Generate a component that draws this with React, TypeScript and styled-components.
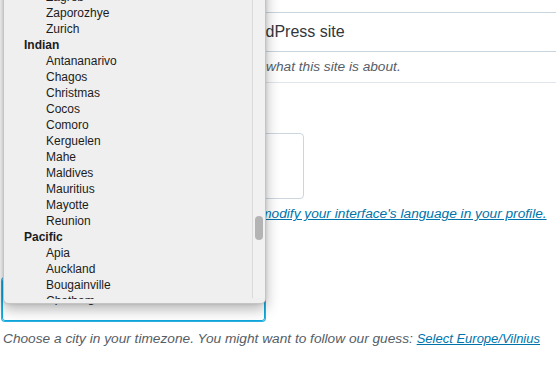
import React from 'react';
import styled, { createGlobalStyle } from 'styled-components';

const GlobalStyle = createGlobalStyle`
  html, body {
    margin: 0;
    padding: 0;
    background: #fff;
    overflow: hidden;
  }
  body {
    font-family: "Liberation Sans", Arial, sans-serif;
  }
`;

const Page = styled.div`
  position: relative;
  width: 556px;
  height: 372px;
  overflow: hidden;
  background: #fff;
`;

const Form = styled.div`
  display: flex;
  flex-direction: column;
  padding-top: 12px;
`;

const Field = styled.div<{ $indent?: number }>`
  margin-left: ${(p) => p.$indent ?? 123}px;
`;

const TextInput = styled.div`
  box-sizing: border-box;
  width: 520px;
  height: 40px;
  border: 1px solid #c8d4de;
  border-right: none;
  padding-left: 20px;
  font-size: 16px;
  line-height: 38px;
  color: #32373c;
  white-space: nowrap;
`;

const Description = styled.p`
  margin: 5px 0 0;
  font-size: 13.7px;
  line-height: 20px;
  font-style: italic;
  color: #555d66;
  white-space: nowrap;
`;

const Link = styled.a<{ $size?: number }>`
  color: #0073aa;
  text-decoration: underline;
  font-size: ${(p) => (p.$size ? `${p.$size}px` : 'inherit')};
`;

const Divider = styled.hr`
  margin: 5px 0 0 120px;
  border: none;
  border-top: 1px solid #dfe5eb;
`;

const LanguageBox = styled.div`
  box-sizing: border-box;
  margin-top: 50px;
  width: 181px;
  height: 66px;
  border: 1px solid #cdd6df;
  border-radius: 4px;
`;

const TimezoneSelect = styled.div`
  box-sizing: border-box;
  margin: 54px 0 0 2px;
  width: 263px;
  height: 43px;
  border: 1px solid #10a6dc;
  border-radius: 3px;
  box-shadow: 0 0 0 1px #2cb2e2;
  padding-left: 22px;
  font-size: 14px;
  line-height: 37px;
  color: #32373c;
`;

const TimezoneNote = styled(Description)`
  margin: 8px 0 0 3px;
`;

const Popup = styled.div`
  position: absolute;
  left: 3px;
  top: -20px;
  width: 263px;
  height: 324px;
  box-sizing: border-box;
  display: flex;
  background: #efefef;
  border: 1px solid #c4c4c4;
  border-radius: 5px;
  box-shadow: 0 5px 14px rgba(0, 0, 0, 0.3), 0 0 3px rgba(0, 0, 0, 0.12);
  overflow: hidden;
  font-family: "Liberation Sans", Helvetica, Arial, sans-serif;
  color: #1c1c1c;
`;

const OptionList = styled.div`
  flex: 1;
  padding-top: 8px;
  margin-bottom: 4px;
  overflow: hidden;
`;

const Row = styled.div<{ $group?: boolean }>`
  height: 16px;
  line-height: 16px;
  font-size: 12px;
  font-weight: ${(p) => (p.$group ? 700 : 400)};
  padding-left: ${(p) => (p.$group ? 20 : 42)}px;
  white-space: nowrap;
`;

const Track = styled.div`
  width: 13px;
  box-sizing: border-box;
  margin-bottom: 5px;
  border-left: 1px solid #dadada;
  background: #f1f1f1;
`;

const Thumb = styled.div`
  margin: 235px 0 0 2px;
  width: 8px;
  height: 24px;
  border-radius: 4px;
  background: #b4b4b4;
`;

type Item = { label: string; group?: boolean };

const items: Item[] = [
  { label: 'Zagreb' },
  { label: 'Zaporozhye' },
  { label: 'Zurich' },
  { label: 'Indian', group: true },
  { label: 'Antananarivo' },
  { label: 'Chagos' },
  { label: 'Christmas' },
  { label: 'Cocos' },
  { label: 'Comoro' },
  { label: 'Kerguelen' },
  { label: 'Mahe' },
  { label: 'Maldives' },
  { label: 'Mauritius' },
  { label: 'Mayotte' },
  { label: 'Reunion' },
  { label: 'Pacific', group: true },
  { label: 'Apia' },
  { label: 'Auckland' },
  { label: 'Bougainville' },
  { label: 'Chatham' },
  { label: 'Chuuk' },
  { label: 'Easter' },
];

export default function App() {
  return (
    <Page>
      <GlobalStyle />
      <Form>
        <Field>
          <TextInput>Just another WordPress site</TextInput>
          <Description>In a few words, explain what this site is about.</Description>
        </Field>
        <Divider />
        <Field>
          <LanguageBox />
        </Field>
        <Field $indent={178}>
          <Description>
            You can also <Link href="#">modify your interface's language in your profile.</Link>
          </Description>
        </Field>
        <TimezoneSelect>Europe/Riga</TimezoneSelect>
        <TimezoneNote>
          Choose a city in your timezone. You might want to follow our guess:{' '}
          <Link href="#" $size={13}>Select Europe/Vilnius</Link>
        </TimezoneNote>
      </Form>

      <Popup>
        <OptionList>
          {items.map((item) => (
            <Row key={item.label} $group={item.group}>
              {item.label}
            </Row>
          ))}
        </OptionList>
        <Track>
          <Thumb />
        </Track>
      </Popup>
    </Page>
  );
}
